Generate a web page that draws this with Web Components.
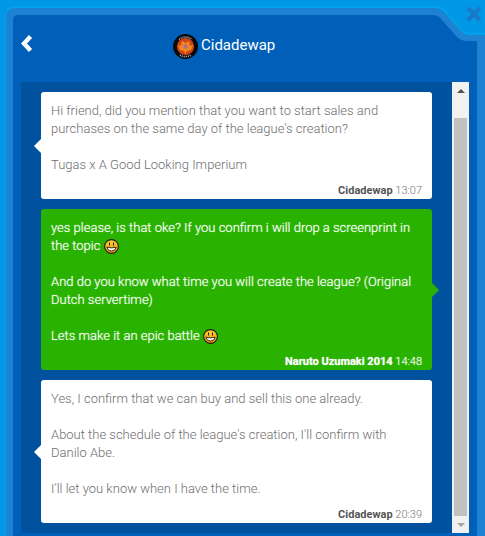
<!DOCTYPE html>
<html>
<head>
<meta charset="utf-8">
<title>Cidadewap</title>
<style>
    html, body { margin: 0; height: 100%; overflow: hidden; background: #0097e6; }
    body { font-family: Roboto, "Liberation Sans", sans-serif; }
</style>
</head>
<body>
<chat-window>
    <chat-header slot="header" name="Cidadewap"></chat-header>
    <chat-bubble side="left" author="Cidadewap" time="13:07">Hi friend, did you mention that you want to start sales and purchases on the same day of the league's creation?<br><br>Tugas x A Good Looking Imperium</chat-bubble>
    <chat-bubble side="right" author="Naruto Uzumaki 2014" time="14:48">yes please, is that oke? If you confirm i will drop a screenprint in the topic <smile-icon></smile-icon><br><br>And do you know what time you will create the league? (Original Dutch servertime)<br><br>Lets make it an epic battle <smile-icon></smile-icon></chat-bubble>
    <chat-bubble side="left" author="Cidadewap" time="20:39">Yes, I confirm that we can buy and sell this one already.<br><br>About the schedule of the league's creation, I'll confirm with Danilo Abe.<br><br>I'll let you know when I have the time.</chat-bubble>
</chat-window>

<script>
class ChatWindow extends HTMLElement {
    connectedCallback() {
        this.attachShadow({ mode: 'open' });
        this.shadowRoot.innerHTML = `
            <style>
                :host { display: block; position: relative; width: 485px; height: 536px; overflow: hidden; }
                .frame { position: absolute; left: 0; top: 0; }
                .close { position: absolute; left: 466px; top: 6px; }
                .inner { position: relative; display: flex; flex-direction: column; padding: 15px 16px 0 13px; height: 536px; box-sizing: border-box; }
                .panel { display: flex; margin: 0 0 0 8px; height: 451px; }
                .list { flex: 1; background: #00529f; padding: 10px 20px 0 20px; display: flex; flex-direction: column; gap: 10px; }
            </style>
            <svg class="frame" width="485" height="536">
                <path d="M5 536V16Q5 6 15 6H436Q442 6 446 11L462 29Q465 33 471 33H485V536Z" fill="#00a3ea"/>
                <path d="M6 536V17Q6 8 15 8H435Q441 8 445 13L461 31Q464 35 470 35H485V536Z" fill="#1e82d2"/>
                <path d="M13 536V20Q13 15 18 15H432Q438 15 441 19L457 37Q461 41 467 41H477V536Z" fill="#0060b9"/>
            </svg>
            <svg class="close" width="16" height="16" viewBox="0 0 16 16">
                <path d="M2 2L14 14M14 2L2 14" stroke="#1a78c8" stroke-width="4"/>
            </svg>
            <div class="inner">
                <slot name="header"></slot>
                <div class="panel">
                    <div class="list"><slot></slot></div>
                    <chat-scrollbar></chat-scrollbar>
                </div>
            </div>
        `;
    }
}

class ChatHeader extends HTMLElement {
    connectedCallback() {
        const name = this.getAttribute('name');
        this.attachShadow({ mode: 'open' });
        this.shadowRoot.innerHTML = `
            <style>
                :host { display: block; height: 67px; position: relative; }
                .title { display: flex; align-items: center; gap: 3px; height: 60px; color: #fff; font-size: 15px; padding-left: 160px; }
                .title svg { flex: none; position: relative; top: 1px; }
                .back { position: absolute; left: 7px; top: 19px; }
            </style>
            <svg class="back" width="14" height="19" viewBox="0 0 14 19">
                <path d="M10.5 2.5L4 9.5L10.5 16.5" fill="none" stroke="#fff" stroke-width="4.4"/>
            </svg>
            <div class="title">
                <svg width="25" height="25" viewBox="0 0 25 25">
                    <circle cx="12.5" cy="12.5" r="12.5" fill="#0a0a0a"/>
                    <path d="M6 5.5A10.2 10.2 0 0 1 19 5.5M7 21A10.2 10.2 0 0 0 18 21" fill="none" stroke="#bdbdbd" stroke-width="1.6" stroke-dasharray="1 1"/>
                    <circle cx="12.5" cy="12.5" r="8.6" fill="#d3431b"/>
                    <path d="M5 11L8 12L9 7L12.5 9L16 7L17 12L20 11L18 16L14 17L12.5 20L11 17L7 16Z" fill="#ec8c1f"/>
                    <rect x="10.5" y="10.5" width="4" height="4" fill="#c0648e"/>
                </svg>
                <span>${name}</span>
            </div>
        `;
    }
}

class ChatBubble extends HTMLElement {
    connectedCallback() {
        const side = this.getAttribute('side');
        this.attachShadow({ mode: 'open' });
        this.shadowRoot.innerHTML = `
            <style>
                :host { display: block; position: relative; font-size: 13px; line-height: 18px; font-weight: 300; }
                .box { border-radius: 3px; padding: 10px 10px 2px 10px; }
                .left { background: #fff; color: #6e6e6e; }
                .right { background: #29b300; color: #fff; text-shadow: 0 0 1px rgba(255, 255, 255, 0.7); }
                .meta { text-align: right; font-size: 11px; line-height: 12px; margin-top: 11px; }
                .left .meta { color: #777; }
                .left .meta b { color: #555; }
                b { font-weight: 700; }
                .arrow { position: absolute; top: 50%; margin-top: -7px; width: 0; height: 0; border: 7px solid transparent; }
                .left .arrow { left: -7px; border-left: 0; border-right-color: #fff; }
                .right .arrow { right: -7px; border-right: 0; border-left-color: #29b300; }
            </style>
            <div class="box ${side}">
                <span class="arrow"></span>
                <div class="text"><slot></slot></div>
                <div class="meta"><b>${this.getAttribute('author')}</b> ${this.getAttribute('time')}</div>
            </div>
        `;
    }
}

class SmileIcon extends HTMLElement {
    connectedCallback() {
        this.attachShadow({ mode: 'open' });
        this.shadowRoot.innerHTML = `
            <style>
                :host { display: inline-block; width: 15px; height: 15px; vertical-align: -4px; }
                svg { display: block; }
            </style>
            <svg width="15" height="15" viewBox="0 0 15 15">
                <defs>
                    <linearGradient id="face" x1="0" y1="0" x2="0" y2="1">
                        <stop offset="0" stop-color="#ffd83a"/>
                        <stop offset="1" stop-color="#f28a00"/>
                    </linearGradient>
                </defs>
                <circle cx="7.5" cy="7.5" r="6.9" fill="url(#face)" stroke="#1a1a1a" stroke-width="1.1"/>
                <rect x="5" y="3.5" width="1" height="3" fill="#222"/>
                <rect x="9" y="3.5" width="1" height="3" fill="#222"/>
                <path d="M2.8 8.2Q7.5 9.6 12.2 8.2Q11.4 12 7.5 12Q3.6 12 2.8 8.2Z" fill="#fff" stroke="#222" stroke-width="0.9"/>
            </svg>
        `;
    }
}

class ChatScrollbar extends HTMLElement {
    connectedCallback() {
        this.attachShadow({ mode: 'open' });
        this.shadowRoot.innerHTML = `
            <style>
                :host { display: flex; flex-direction: column; width: 17px; background: #f1f1f1; }
                .btn { height: 17px; display: flex; align-items: center; justify-content: center; flex: none; }
                .thumb { flex: 1; background: #c1c1c1; margin: 0 2px; }
                .up { border: 4px solid transparent; border-top: 0; border-bottom: 4px solid #505050; }
                .down { border: 4px solid transparent; border-bottom: 0; border-top: 4px solid #a3a3a3; }
                .track { flex: 1; display: flex; flex-direction: column; padding-top: 19px; }
            </style>
            <div class="btn"><span class="up"></span></div>
            <div class="track"><div class="thumb"></div></div>
            <div class="btn"><span class="down"></span></div>
        `;
    }
}

customElements.define('chat-window', ChatWindow);
customElements.define('chat-header', ChatHeader);
customElements.define('chat-bubble', ChatBubble);
customElements.define('smile-icon', SmileIcon);
customElements.define('chat-scrollbar', ChatScrollbar);
</script>
</body>
</html>
